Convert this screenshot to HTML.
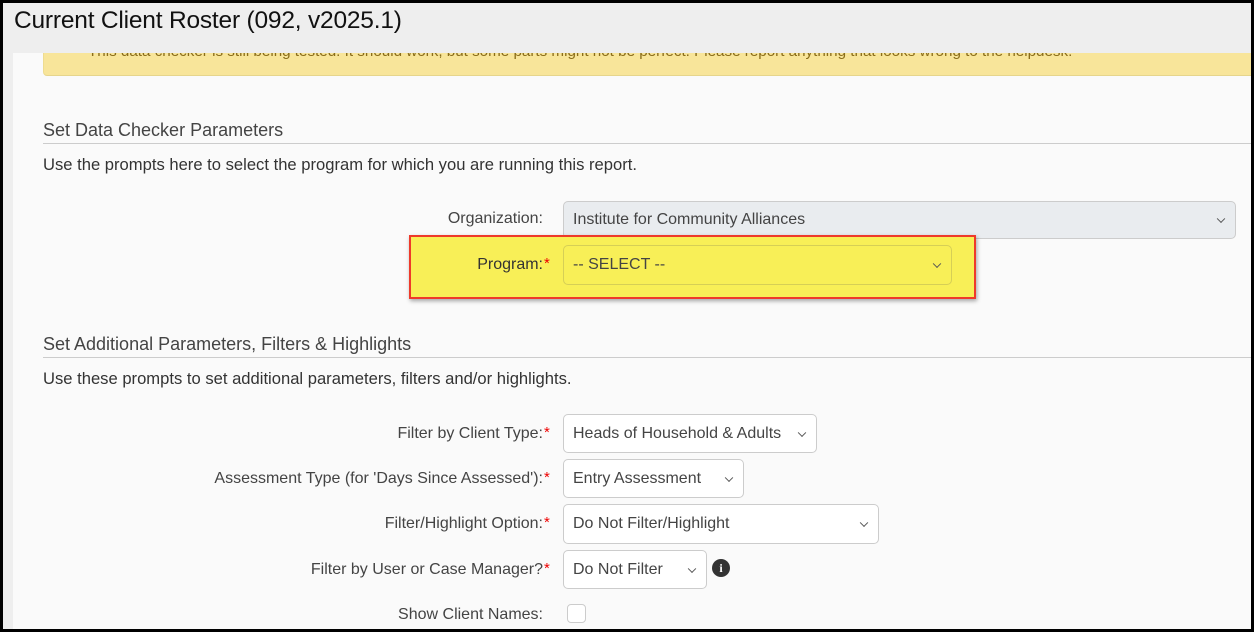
<!DOCTYPE html>
<html><head><meta charset="utf-8"><style>
*{box-sizing:border-box;margin:0;padding:0}
body{width:1254px;height:632px;overflow:hidden;background:#000;font-family:"Liberation Sans",sans-serif;color:#444;position:relative}
#frame{position:absolute;left:3px;top:3px;width:1248px;height:626px;background:#eee;overflow:hidden}
#content{position:absolute;left:10px;top:50px;width:1238px;height:576px;background:#fafafa}
.abs{position:absolute}
h1{position:absolute;left:11px;top:4px;font-size:24.5px;font-weight:normal;color:#111;letter-spacing:-0.2px}
.alert{position:absolute;left:40px;top:50px;width:1210px;height:23px;background:#f8e59a;border-bottom:1px solid #e6d58c;border-left:1px solid #eedc90;border-radius:0 0 0 4px;overflow:hidden}
.alert span{position:absolute;left:44px;top:-10px;font-size:15.2px;color:#8a6d1a;white-space:nowrap}
.h2{position:absolute;left:40px;font-size:18px;color:#444}
.line{position:absolute;left:40px;width:1210px;height:1px;background:#ccc}
.p{position:absolute;left:40px;font-size:16.6px;color:#333}
.lbl{position:absolute;right:710px;font-size:16px;color:#444;text-align:right;white-space:nowrap}
.req{color:#e00;position:absolute;font-size:15px}
.sel{position:absolute;left:560px;border:1px solid #ccc;border-radius:5px;background:#fff;font-size:16px;color:#444;padding-left:9px;display:flex;align-items:center}
.sel:after{content:"";position:absolute;right:11px;top:50%;width:5px;height:5px;border-right:1.3px solid #555;border-bottom:1.3px solid #555;transform:translateY(-70%) rotate(45deg)}
</style></head><body>
<div id="frame">
<h1>Current Client Roster (092, v2025.1)</h1>
<div id="content"></div>
<div class="alert"><span>This data checker is still being tested. It should work, but some parts might not be perfect. Please report anything that looks wrong to the helpdesk.</span></div>
<div class="h2" style="top:117px">Set Data Checker Parameters</div>
<div class="line" style="top:140px"></div>
<div class="p" style="top:152px">Use the prompts here to select the program for which you are running this report.</div>
<div class="lbl" style="top:207px;right:708px">Organization:</div>
<div class="sel" style="top:198px;width:673px;height:38px;background:#e9ecef">Institute for Community Alliances</div>
<div class="abs" style="left:406px;top:232px;width:567px;height:64px;background:#f8ef57;border:2px solid #ee3a2a;box-shadow:1px 2px 4px rgba(0,0,0,.35)"></div>
<div class="lbl" style="top:253px;right:708px;color:#333">Program:</div><span class="req" style="left:541px;top:252px">*</span>
<div class="sel" style="top:242px;width:389px;height:40px;background:#f8ef57;border-color:#d6cf56">-- SELECT --</div>
<div class="h2" style="top:331px">Set Additional Parameters, Filters &amp; Highlights</div>
<div class="line" style="top:354px"></div>
<div class="p" style="top:366px">Use these prompts to set additional parameters, filters and/or highlights.</div>
<div class="lbl" style="top:422px;right:708px">Filter by Client Type:</div><span class="req" style="left:541px;top:421px">*</span>
<div class="sel" style="top:411px;width:254px;height:39px">Heads of Household &amp; Adults</div>
<div class="lbl" style="top:467px;right:708px">Assessment Type (for 'Days Since Assessed'):</div><span class="req" style="left:541px;top:466px">*</span>
<div class="sel" style="top:456px;width:181px;height:39px">Entry Assessment</div>
<div class="lbl" style="top:512px;right:708px">Filter/Highlight Option:</div><span class="req" style="left:541px;top:511px">*</span>
<div class="sel" style="top:501px;width:316px;height:40px">Do Not Filter/Highlight</div>
<div class="lbl" style="top:558px;right:708px">Filter by User or Case Manager?</div><span class="req" style="left:541px;top:557px">*</span>
<div class="sel" style="top:547px;width:144px;height:39px">Do Not Filter</div>
<div class="abs" style="left:709px;top:556px;width:18px;height:18px;border-radius:50%;background:#333;color:#fff;font:bold 12px 'Liberation Serif',serif;text-align:center;line-height:18px">i</div>
<div class="lbl" style="top:603px;right:708px">Show Client Names:</div>
<div class="abs" style="left:564px;top:601px;width:19px;height:19px;border:1px solid #ccc;border-radius:4px;background:#fff"></div>
</div>
</body></html>
